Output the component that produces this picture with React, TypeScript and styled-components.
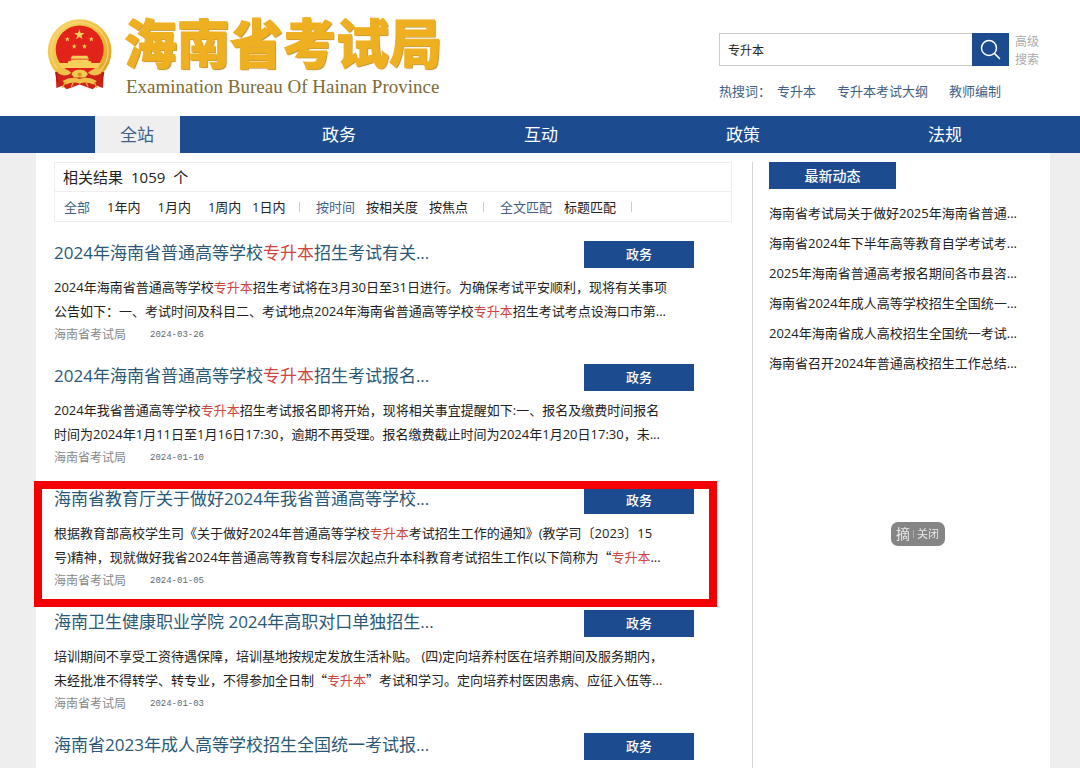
import React from 'react';
import styled, { createGlobalStyle } from 'styled-components';

const navy = '#1d4b8f';
const slate = '#3f5f86';
const sans = '"Open Sans", "Noto Sans CJK SC", sans-serif';

const GlobalStyle = createGlobalStyle`
  *, *::before, *::after { box-sizing: border-box; }
  body {
    margin: 0;
    background: #eeeeee;
    color: #222222;
    font: 13px/24px ${sans};
  }
  h1, h2, p, ul, ol { margin: 0; padding: 0; font-weight: 400; }
  ul, ol { list-style: none; }
  a { color: inherit; text-decoration: none; }
  button, input { font-family: inherit; }
`;

const Page = styled.div`
  min-height: 100vh;
  display: flex;
  flex-direction: column;
`;

const Header = styled.header`
  display: flex;
  justify-content: space-between;
  align-items: flex-start;
  height: 116px;
  padding: 0 38px 0 46px;
  background: #ffffff;
`;

const Brand = styled.a`
  display: flex;
  gap: 10px;
  padding-top: 18px;
`;

const BrandText = styled.div`
  display: flex;
  flex-direction: column;
  gap: 9px;
`;

const BrandName = styled.h1`
  font: 900 53px/46px "Noto Sans CJK SC", sans-serif;
  color: #eeb021;
  -webkit-text-stroke: 1px #eeb021;
  text-shadow: 1px 1px 1px #a9822c;
  white-space: nowrap;
`;

const BrandSub = styled.p`
  padding-left: 2px;
  font: 19px/28px "Liberation Serif", serif;
  color: #7d6b35;
  white-space: nowrap;
`;

const SearchArea = styled.div`
  width: 323px;
  padding-top: 33px;
`;

const SearchForm = styled.form`
  display: flex;
`;

const SearchInput = styled.input`
  flex: 1;
  min-width: 0;
  height: 33px;
  padding: 0 8px;
  border: 1px solid #cccccc;
  border-right: 0;
  border-radius: 0;
  background: #ffffff;
  color: #222222;
  font-size: 12px;
  outline: none;
`;

const SearchButton = styled.button`
  display: flex;
  align-items: center;
  justify-content: center;
  width: 37px;
  height: 33px;
  padding: 0;
  border: 0;
  background: ${navy};
  color: #ffffff;
`;

const Advanced = styled.a`
  width: 33px;
  height: 33px;
  padding: 0 2px 0 6px;
  font-size: 12px;
  line-height: 18px;
  color: #aaaaaa;
`;

const HotWords = styled.div`
  display: flex;
  margin-top: 13px;
  color: ${slate};
  white-space: nowrap;
`;

const HotLabel = styled.span`
  width: 58px;
`;

const HotLink = styled.a`
  margin-right: 21px;
`;

const Nav = styled.nav`
  height: 37px;
  padding: 0 34px 0 36px;
  background: ${navy};
`;

const NavList = styled.ul`
  display: grid;
  grid-template-columns: repeat(5, 1fr);
  justify-items: center;
`;

const NavLink = styled.a<{ $active?: boolean }>`
  display: block;
  width: 85px;
  font-size: 17px;
  line-height: 37px;
  text-align: center;
  color: ${(p) => (p.$active ? slate : '#ffffff')};
  background: ${(p) => (p.$active ? '#efefef' : 'transparent')};
`;

const Main = styled.main`
  flex: 1;
  display: flex;
  margin: 0 30px 0 36px;
  padding: 9px 18px 0;
  background: #ffffff;
`;

const Results = styled.section`
  flex: 1;
  min-width: 0;
  padding-right: 20px;
`;

const Summary = styled.div`
  border: 1px solid #eeeeee;
`;

const Count = styled.p`
  height: 29px;
  padding-left: 8px;
  font-size: 15px;
  line-height: 29px;
  border-bottom: 1px solid #eeeeee;
`;

const Total = styled.span`
  margin: 0 8px;
`;

const Filters = styled.div`
  display: flex;
  align-items: center;
  height: 29px;
  padding-left: 9px;
`;

const FilterGroup = styled.div<{ $width: number; $gap: number; $divided?: boolean }>`
  display: flex;
  align-items: center;
  gap: ${(p) => p.$gap}px;
  width: ${(p) => p.$width}px;
  white-space: nowrap;

  &::after {
    content: '';
    display: ${(p) => (p.$divided ? 'block' : 'none')};
    width: 1px;
    height: 10px;
    margin-left: auto;
    margin-right: 16px;
    background: #cccccc;
  }
`;

const Filter = styled.a<{ $active?: boolean }>`
  color: ${(p) => (p.$active ? slate : '#222222')};
`;

const ResultList = styled.ol`
  margin-top: 19px;
  padding-right: 38px;
`;

const ResultItem = styled.li`
  position: relative;
  margin-bottom: 17px;
`;

const ResultHead = styled.div`
  display: flex;
  justify-content: space-between;
  margin-bottom: 7px;
`;

const ResultTitle = styled.h2`
  font-size: 17px;
  line-height: 23px;
  color: #2b5876;
  white-space: nowrap;
`;

const Tag = styled.span`
  width: 110px;
  height: 27px;
  background: ${navy};
  color: #ffffff;
  font-weight: 500;
  line-height: 27px;
  text-align: center;
`;

const Line = styled.span`
  display: block;
  height: 24px;
  white-space: nowrap;
`;

const Keyword = styled.em`
  font-style: normal;
  color: #cf4540;
`;

const Quote = styled.span`
  font-family: "Noto Sans CJK SC", sans-serif;
`;

const Meta = styled.div`
  display: flex;
  gap: 24px;
  font-size: 12px;
  color: #888888;
`;

const DateText = styled.time`
  font-family: "Liberation Mono", monospace;
  font-size: 9px;
  color: #666666;
`;

const Highlight = styled.div`
  position: absolute;
  inset: -6px -23px -14px -20px;
  border: 8px solid #f40000;
  pointer-events: none;
`;

const Aside = styled.aside`
  width: 280px;
  padding-left: 16px;
  border-left: 1px solid #d4d4d4;
`;

const AsideTitle = styled.h2`
  width: 127px;
  margin-bottom: 9px;
  background: ${navy};
  color: #ffffff;
  font-size: 14px;
  font-weight: 500;
  line-height: 27px;
  text-align: center;
`;

const NewsLink = styled.a`
  display: block;
  line-height: 30px;
  white-space: nowrap;
`;

const Pill = styled.div`
  position: fixed;
  top: 522px;
  right: 135px;
  display: flex;
  align-items: center;
  width: 54px;
  height: 24px;
  padding: 0 5px;
  border-radius: 7px;
  background: #858585;
`;

const PillButton = styled.button<{ $size: number }>`
  padding: 0;
  border: 0;
  background: none;
  color: #e8e8e8;
  font-size: ${(p) => p.$size}px;
  line-height: 24px;
`;

const PillDivider = styled.span`
  width: 1px;
  height: 8px;
  margin: 0 3px;
  background: #b0b0b0;
`;

function starPoints(cx: number, cy: number, r: number) {
  return Array.from({ length: 10 }, (_, i) => {
    const a = (Math.PI / 5) * i - Math.PI / 2;
    const d = i % 2 ? r * 0.4 : r;
    return `${cx + d * Math.cos(a)},${cy + d * Math.sin(a)}`;
  }).join(' ');
}

function Emblem() {
  return (
    <svg width="68" height="74" viewBox="48 42 198 216" aria-hidden="true">
      <defs>
        <linearGradient id="ring" x1="0" y1="0" x2="1" y2="1">
          <stop offset="0" stopColor="#f7d873" />
          <stop offset="0.5" stopColor="#efbf3e" />
          <stop offset="1" stopColor="#d89a26" />
        </linearGradient>
      </defs>
      <circle cx="146" cy="139" r="93" fill="url(#ring)" />
      <circle cx="146" cy="138" r="83" fill="none" stroke="#f6d97c" strokeWidth="3" />
      <path d="M76 200 L112 188 H180 L216 200 L214 246 L196 240 L184 250 L146 236 L108 250 L96 240 L78 246 Z" fill="#cf2118" />
      <circle cx="146" cy="134" r="70" fill="#e2231a" />
      <g fill="#f6cf58">
        <polygon points={starPoints(145, 91, 16)} />
        <polygon points={starPoints(110, 104, 8)} />
        <polygon points={starPoints(180, 104, 8)} />
        <polygon points={starPoints(130, 125, 8)} />
        <polygon points={starPoints(160, 125, 8)} />
        <path d="M124 152 H168 L173 161 H119 Z" />
        <path d="M120 163 H172 V168 H180 V174 H112 V168 H120 Z" />
        <path d="M84 173 H208 L199 188 H93 Z" />
      </g>
      <path d="M76 190 Q108 186 122 202 Q106 216 84 204 Z M216 190 Q184 186 170 202 Q186 216 208 204 Z" fill="#efc04a" />
      <path d="M122 206 Q128 193 146 193 Q164 193 170 206 L162 216 H130 Z" fill="#f4c94f" />
      <circle cx="146" cy="207" r="6" fill="#d9961f" />
      <path d="M96 226 Q122 210 146 220 Q170 210 196 226 L186 236 Q164 226 146 234 Q128 226 106 236 Z" fill="#f1c147" />
      <path d="M104 228 L96 246 M188 228 L196 246 M128 228 L122 242 M164 228 L170 242" stroke="#e5ac35" strokeWidth="4" />
      <path d="M76 200 L82 228 M216 200 L210 228" stroke="#b3150f" strokeWidth="4" />
    </svg>
  );
}

function SearchIcon() {
  return (
    <svg width="21" height="21" viewBox="0 0 21 21" fill="none" stroke="currentColor" strokeWidth="1.5" aria-hidden="true">
      <circle cx="9" cy="9" r="7.5" />
      <path d="M14.4 14.4 L19.5 19.5" strokeLinecap="round" />
    </svg>
  );
}

/* Colours the searched word and sets Chinese quotation marks full width. */
function Marked({ text }: { text: string }) {
  return (
    <>
      {text.split(/(专升本|[“”])/).map((part, i) => {
        if (part === '专升本') return <Keyword key={i}>{part}</Keyword>;
        if (part === '“' || part === '”') return <Quote key={i} lang="zh-CN">{part}</Quote>;
        return part;
      })}
    </>
  );
}

type Result = { title: string; lines?: string[]; date?: string; framed?: boolean };

const results: Result[] = [
  {
    title: '2024年海南省普通高等学校专升本招生考试有关...',
    lines: [
      '2024年海南省普通高等学校专升本招生考试将在3月30日至31日进行。为确保考试平安顺利，现将有关事项',
      '公告如下：一、考试时间及科目二、考试地点2024年海南省普通高等学校专升本招生考试考点设海口市第...',
    ],
    date: '2024-03-26',
  },
  {
    title: '2024年海南省普通高等学校专升本招生考试报名...',
    lines: [
      '2024年我省普通高等学校专升本招生考试报名即将开始，现将相关事宜提醒如下:一、报名及缴费时间报名',
      '时间为2024年1月11日至1月16日17:30，逾期不再受理。报名缴费截止时间为2024年1月20日17:30，未...',
    ],
    date: '2024-01-10',
  },
  {
    title: '海南省教育厅关于做好2024年我省普通高等学校...',
    lines: [
      '根据教育部高校学生司《关于做好2024年普通高等学校专升本考试招生工作的通知》(教学司〔2023〕15',
      '号)精神，现就做好我省2024年普通高等教育专科层次起点升本科教育考试招生工作(以下简称为“专升本...',
    ],
    date: '2024-01-05',
    framed: true,
  },
  {
    title: '海南卫生健康职业学院 2024年高职对口单独招生...',
    lines: [
      '培训期间不享受工资待遇保障，培训基地按规定发放生活补贴。 (四)定向培养村医在培养期间及服务期内，',
      '未经批准不得转学、转专业，不得参加全日制“专升本”考试和学习。定向培养村医因患病、应征入伍等...',
    ],
    date: '2024-01-03',
  },
  { title: '海南省2023年成人高等学校招生全国统一考试报...' },
];

const news = [
  '海南省考试局关于做好2025年海南省普通...',
  '海南省2024年下半年高等教育自学考试考...',
  '2025年海南省普通高考报名期间各市县咨...',
  '海南省2024年成人高等学校招生全国统一...',
  '2024年海南省成人高校招生全国统一考试...',
  '海南省召开2024年普通高校招生工作总结...',
];

const filterGroups = [
  { width: 188, gap: 17, items: ['全部', '1年内', '1月内', '1周内'] },
  { width: 64, gap: 0, items: ['1日内'], divided: true },
  { width: 184, gap: 11, items: ['按时间', '按相关度', '按焦点'], divided: true },
  { width: 148, gap: 12, items: ['全文匹配', '标题匹配'], divided: true },
];

const activeFilters = ['全部', '按时间', '全文匹配'];

export default function App() {
  return (
    <Page>
      <GlobalStyle />
      <Header>
        <Brand href="#">
          <Emblem />
          <BrandText>
            <BrandName>海南省考试局</BrandName>
            <BrandSub>Examination Bureau Of Hainan Province</BrandSub>
          </BrandText>
        </Brand>
        <SearchArea>
          <SearchForm onSubmit={(e) => e.preventDefault()}>
            <SearchInput type="text" aria-label="搜索" defaultValue="专升本" />
            <SearchButton type="submit" aria-label="搜索">
              <SearchIcon />
            </SearchButton>
            <Advanced href="#">高级搜索</Advanced>
          </SearchForm>
          <HotWords>
            <HotLabel>热搜词：</HotLabel>
            <HotLink href="#">专升本</HotLink>
            <HotLink href="#">专升本考试大纲</HotLink>
            <HotLink href="#">教师编制</HotLink>
          </HotWords>
        </SearchArea>
      </Header>
      <Nav>
        <NavList>
          {['全站', '政务', '互动', '政策', '法规'].map((label, i) => (
            <li key={label}>
              <NavLink href="#" $active={i === 0}>{label}</NavLink>
            </li>
          ))}
        </NavList>
      </Nav>
      <Main>
        <Results>
          <Summary>
            <Count>相关结果<Total>1059</Total>个</Count>
            <Filters>
              {filterGroups.map((group) => (
                <FilterGroup key={group.width} $width={group.width} $gap={group.gap} $divided={group.divided}>
                  {group.items.map((item) => (
                    <Filter key={item} href="#" $active={activeFilters.includes(item)}>{item}</Filter>
                  ))}
                </FilterGroup>
              ))}
            </Filters>
          </Summary>
          <ResultList>
            {results.map((r) => (
              <ResultItem key={r.title}>
                <ResultHead>
                  <ResultTitle>
                    <a href="#"><Marked text={r.title} /></a>
                  </ResultTitle>
                  <Tag>政务</Tag>
                </ResultHead>
                {r.lines && (
                  <p>
                    {r.lines.map((line) => (
                      <Line key={line}><Marked text={line} /></Line>
                    ))}
                  </p>
                )}
                {r.date && (
                  <Meta>
                    <span>海南省考试局</span>
                    <DateText>{r.date}</DateText>
                  </Meta>
                )}
                {r.framed && <Highlight />}
              </ResultItem>
            ))}
          </ResultList>
        </Results>
        <Aside>
          <AsideTitle>最新动态</AsideTitle>
          <ul>
            {news.map((item) => (
              <li key={item}>
                <NewsLink href="#">{item}</NewsLink>
              </li>
            ))}
          </ul>
        </Aside>
      </Main>
      <Pill>
        <PillButton type="button" $size={14}>摘</PillButton>
        <PillDivider />
        <PillButton type="button" $size={11}>关闭</PillButton>
      </Pill>
    </Page>
  );
}
